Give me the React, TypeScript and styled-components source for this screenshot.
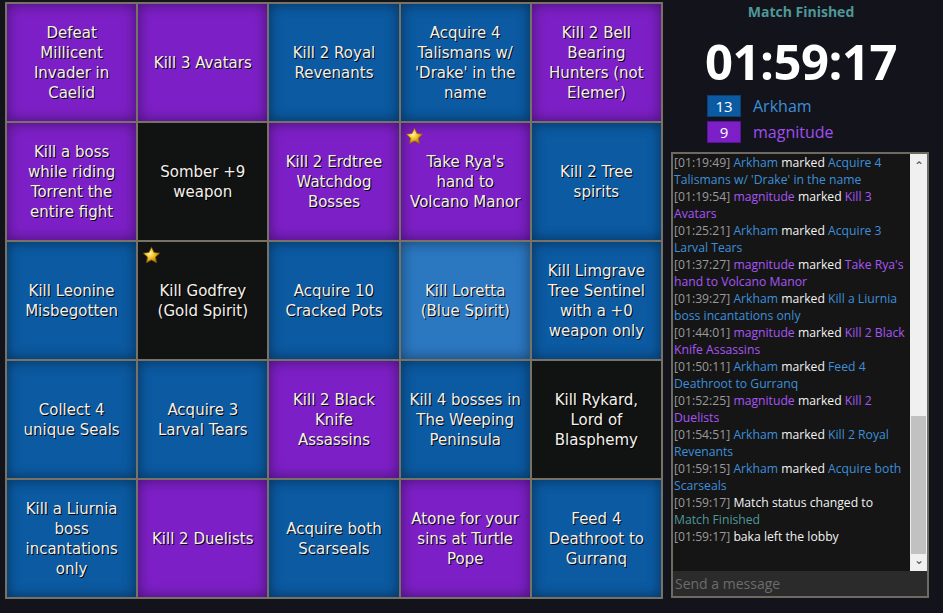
import React from 'react';
import styled, { createGlobalStyle } from 'styled-components';

type Tone = 'purple' | 'blue' | 'black' | 'hover';

type GoalType = {
  text: string,
  tone: Tone,
  star?: boolean,
};

type LineType = {
  time: string,
  who?: 'Arkham' | 'magnitude',
  goal?: string,
  plain?: string,
  status?: string,
};

const goals: GoalType[] = [
  { text: 'Defeat Millicent Invader in Caelid', tone: 'purple' },
  { text: 'Kill 3 Avatars', tone: 'purple' },
  { text: 'Kill 2 Royal Revenants', tone: 'blue' },
  { text: "Acquire 4 Talismans w/ 'Drake' in the name", tone: 'blue' },
  { text: 'Kill 2 Bell Bearing Hunters (not Elemer)', tone: 'purple' },

  { text: 'Kill a boss while riding Torrent the entire fight', tone: 'purple' },
  { text: 'Somber +9 weapon', tone: 'black' },
  { text: 'Kill 2 Erdtree Watchdog Bosses', tone: 'purple' },
  { text: "Take Rya's hand to Volcano Manor", tone: 'purple', star: true },
  { text: 'Kill 2 Tree spirits', tone: 'blue' },

  { text: 'Kill Leonine Misbegotten', tone: 'blue' },
  { text: 'Kill Godfrey (Gold Spirit)', tone: 'black', star: true },
  { text: 'Acquire 10 Cracked Pots', tone: 'blue' },
  { text: 'Kill Loretta (Blue Spirit)', tone: 'hover' },
  { text: 'Kill Limgrave Tree Sentinel with a +0 weapon only', tone: 'blue' },

  { text: 'Collect 4 unique Seals', tone: 'blue' },
  { text: 'Acquire 3 Larval Tears', tone: 'blue' },
  { text: 'Kill 2 Black Knife Assassins', tone: 'purple' },
  { text: 'Kill 4 bosses in The Weeping Peninsula', tone: 'blue' },
  { text: 'Kill Rykard, Lord of Blasphemy', tone: 'black' },

  { text: 'Kill a Liurnia boss incantations only', tone: 'blue' },
  { text: 'Kill 2 Duelists', tone: 'purple' },
  { text: 'Acquire both Scarseals', tone: 'blue' },
  { text: 'Atone for your sins at Turtle Pope', tone: 'purple' },
  { text: 'Feed 4 Deathroot to Gurranq', tone: 'blue' },
];

const lines: LineType[] = [
  { time: '01:19:49', who: 'Arkham', goal: "Acquire 4 Talismans w/ 'Drake' in the name" },
  { time: '01:19:54', who: 'magnitude', goal: 'Kill 3 Avatars' },
  { time: '01:25:21', who: 'Arkham', goal: 'Acquire 3 Larval Tears' },
  { time: '01:37:27', who: 'magnitude', goal: "Take Rya's hand to Volcano Manor" },
  { time: '01:39:27', who: 'Arkham', goal: 'Kill a Liurnia boss incantations only' },
  { time: '01:44:01', who: 'magnitude', goal: 'Kill 2 Black Knife Assassins' },
  { time: '01:50:11', who: 'Arkham', goal: 'Feed 4 Deathroot to Gurranq' },
  { time: '01:52:25', who: 'magnitude', goal: 'Kill 2 Duelists' },
  { time: '01:54:51', who: 'Arkham', goal: 'Kill 2 Royal Revenants' },
  { time: '01:59:15', who: 'Arkham', goal: 'Acquire both Scarseals' },
  { time: '01:59:17', plain: 'Match status changed to ', status: 'Match Finished' },
  { time: '01:59:17', plain: 'baka left the lobby' },
];

const toneColor = {
  purple: '#7d1fc6',
  blue: '#0b5aa2',
  black: '#111212',
  hover: '#2b77c0',
};

const Star = () => (
  <StarIcon viewBox="0 0 24 24">
    <defs>
      <radialGradient id="sg" cx="40%" cy="40%" r="60%">
        <stop offset="0%" stopColor="#fff6b0" />
        <stop offset="45%" stopColor="#f5c62a" />
        <stop offset="100%" stopColor="#b07a08" />
      </radialGradient>
    </defs>
    <path
      d="M12 1.5l3.1 6.6 7.2.9-5.3 5 1.4 7.1L12 17.6l-6.4 3.5 1.4-7.1-5.3-5 7.2-.9z"
      fill="url(#sg)"
      stroke="#8a5a00"
      strokeWidth="0.8"
    />
  </StarIcon>
);

export default class App extends React.Component {
  renderLine = (l: LineType, i: number) => {
    return (
      <Line key={i}>
        <Stamp>[{l.time}] </Stamp>
        {l.who ? (
          <>
            <Name who={l.who}>{l.who}</Name> marked <Name who={l.who}>{l.goal}</Name>
          </>
        ) : (
          <>
            {l.plain}
            {l.status && <Status>{l.status}</Status>}
          </>
        )}
      </Line>
    );
  }

  render() {
    return (
      <Page>
        <GlobalStyle />
        <Board>
          {goals.map((g, i) => (
            <Cell key={i} tone={g.tone}>
              {g.star && <Star />}
              <CellText>{g.text}</CellText>
            </Cell>
          ))}
        </Board>

        <Side>
          <MatchStatus>Match Finished</MatchStatus>
          <Timer>01:59:17</Timer>
          <Scores>
            <ScoreRow>
              <ScoreBox tone="blue">13</ScoreBox>
              <Player who="Arkham">Arkham</Player>
            </ScoreRow>
            <ScoreRow>
              <ScoreBox tone="purple">9</ScoreBox>
              <Player who="magnitude">magnitude</Player>
            </ScoreRow>
          </Scores>

          <Chat>
            <ChatBody>
              <Log>
                {lines.map(this.renderLine)}
              </Log>
              <Scrollbar>
                <Arrow>&#8963;</Arrow>
                <Track>
                  <Thumb />
                </Track>
                <Arrow down>&#8964;</Arrow>
              </Scrollbar>
            </ChatBody>
            <Input placeholder="Send a message" />
          </Chat>
        </Side>
      </Page>
    );
  }
}

const GlobalStyle = createGlobalStyle`
  html, body {
    margin: 0;
    padding: 0;
    background: #13131b;
  }
`;

const Page = styled.div`
  display: flex;
  width: 943px;
  height: 613px;
  padding: 2px 0 0 5px;
  box-sizing: border-box;
  background: #13131b;
`;

const Board = styled.div`
  display: grid;
  grid-template-columns: repeat(5, 1fr);
  grid-template-rows: repeat(5, 117px);
  gap: 2px;
  padding: 2px;
  width: 658px;
  height: 597px;
  box-sizing: border-box;
  background: #777166;
`;

const Cell = styled.div<{ tone: Tone }>`
  position: relative;
  display: flex;
  align-items: center;
  justify-content: center;
  padding: 0 8px;
  background: ${props => toneColor[props.tone]};
  box-shadow: inset 0 0 14px rgba(0, 0, 0, ${props => props.tone === 'black' ? '0' : '0.45'});
`;

const CellText = styled.div`
  font-family: 'DejaVu Sans', sans-serif;
  font-size: 15px;
  line-height: 20px;
  margin-top: 1px;
  color: #f4f0ea;
  text-align: center;
  text-shadow: 1px 1px 0 #000;
`;

const StarIcon = styled.svg`
  position: absolute;
  top: 4px;
  left: 4px;
  width: 19px;
  height: 19px;
`;

const Side = styled.div`
  display: flex;
  flex-direction: column;
  align-items: center;
  width: 260px;
  padding-left: 8px;
  font-family: 'Open Sans', sans-serif;
`;

const MatchStatus = styled.div`
  font-size: 14px;
  font-weight: 700;
  color: #4e9898;
  line-height: 20px;
`;

const Timer = styled.div`
  margin-top: 10px;
  font-size: 49px;
  font-weight: 700;
  color: #ffffff;
  line-height: 58px;
  letter-spacing: -0.5px;
`;

const Scores = styled.div`
  align-self: flex-start;
  display: flex;
  flex-direction: column;
  gap: 4px;
  margin: 5px 0 0 36px;
`;

const ScoreRow = styled.div`
  display: flex;
  align-items: center;
`;

const ScoreBox = styled.div<{ tone: Tone }>`
  width: 34px;
  height: 22px;
  box-sizing: border-box;
  display: flex;
  align-items: center;
  justify-content: center;
  border: 1px solid ${props => props.tone === 'blue' ? '#0a3f78' : '#5a149a'};
  background: ${props => toneColor[props.tone]};
  color: #fff;
  font-size: 15px;
`;

const Player = styled.div<{ who: string }>`
  margin-left: 12px;
  font-size: 16px;
  color: ${props => props.who === 'Arkham' ? '#3d8fd9' : '#a04ff0'};
`;

const Chat = styled.div`
  align-self: flex-start;
  margin-top: 9px;
  width: 258px;
  height: 446px;
  box-sizing: border-box;
  border: 2px solid #6e6a62;
  display: flex;
  flex-direction: column;
  background: #151515;
`;

const ChatBody = styled.div`
  flex: 1;
  display: flex;
  min-height: 0;
`;

const Log = styled.div`
  flex: 1;
  padding: 0 0 0 1px;
  overflow: hidden;
  font-size: 12.2px;
  line-height: 17px;
  color: #f2f2f2;
`;

const Line = styled.div``;

const Stamp = styled.span`
  color: #9a9a9a;
`;

const Name = styled.span<{ who: string }>`
  color: ${props => props.who === 'Arkham' ? '#3d8fd9' : '#a955f5'};
`;

const Status = styled.span`
  color: #4e9898;
`;

const Scrollbar = styled.div`
  width: 17px;
  display: flex;
  flex-direction: column;
  background: #f0f0f0;
`;

const Arrow = styled.div<{ down?: boolean }>`
  height: 17px;
  display: flex;
  align-items: center;
  justify-content: center;
  font-size: 12px;
  color: #505050;
  line-height: 1;
  padding-top: ${props => props.down ? '0' : '6px'};
  padding-bottom: ${props => props.down ? '6px' : '0'};
  box-sizing: border-box;
`;

const Track = styled.div`
  flex: 1;
  display: flex;
  flex-direction: column;
  justify-content: flex-end;
  padding: 0 1px 0;
`;

const Thumb = styled.div`
  height: 138px;
  background: #c1c1c1;
`;

const Input = styled.input`
  height: 25px;
  border: none;
  outline: none;
  padding: 0 2px;
  background: #2b2b2b;
  color: #fff;
  font-family: 'Open Sans', sans-serif;
  font-size: 14px;

  &::placeholder {
    color: #6c6c6c;
  }
`;
